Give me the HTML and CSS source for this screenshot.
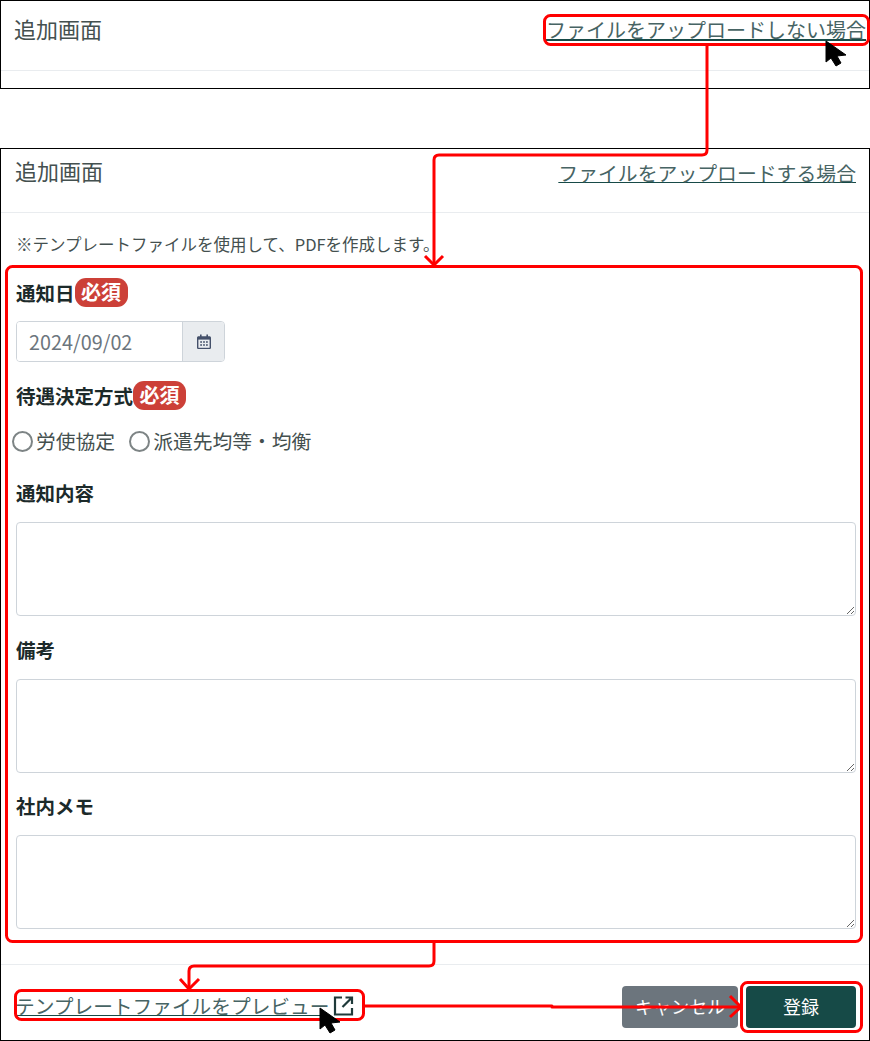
FILE: index.html
```html
<!DOCTYPE html>
<html lang="ja">
<head>
    <meta charset="UTF-8">
    <title>追加画面</title>
    <link rel="stylesheet" href="styles.css">
</head>
<body>
    <div class="page">
        <section class="panel panel-top">
            <div class="panel-header">
                <h2>追加画面</h2>
                <a href="#" class="link link-top">ファイルをアップロードしない場合</a>
            </div>
        </section>

        <section class="panel panel-main">
            <div class="panel-header main-header">
                <h2>追加画面</h2>
                <a href="#" class="link">ファイルをアップロードする場合</a>
            </div>

            <div class="panel-body">
                <p class="note">※テンプレートファイルを使用して、PDFを作成します。</p>

                <div class="form-group group-date">
                    <div class="label-row"><label>通知日</label><span class="badge">必須</span></div>
                    <div class="date-input">
                        <input type="text" value="2024/09/02">
                        <span class="date-addon">
                            <svg width="16" height="16" viewBox="0 0 16 16">
                                <path fill="#44506a" d="M4 0.5h1.6v1.7h4.8V0.5H12v1.7h1.4c.9 0 1.6.7 1.6 1.6v9.6c0 .9-.7 1.6-1.6 1.6H2.6c-.9 0-1.6-.7-1.6-1.6V3.8c0-.9.7-1.6 1.6-1.6H4z"/>
                                <rect x="2.4" y="5.6" width="11.2" height="8.2" fill="#e9ecef"/>
                                <path fill="#44506a" d="M4.2 7.2h1.8v1.6H4.2zM7.1 7.2h1.8v1.6H7.1zM10 7.2h1.8v1.6H10zM4.2 10.2h1.8v1.6H4.2zM7.1 10.2h1.8v1.6H7.1zM10 10.2h1.8v1.6H10z"/>
                            </svg>
                        </span>
                    </div>
                </div>

                <div class="form-group group-radio">
                    <div class="label-row"><label>待遇決定方式</label><span class="badge">必須</span></div>
                    <div class="radio-row">
                        <label class="radio"><span class="radio-mark"></span>労使協定</label>
                        <label class="radio"><span class="radio-mark"></span>派遣先均等・均衡</label>
                    </div>
                </div>

                <div class="form-group group-notice">
                    <div class="label-row plain"><label>通知内容</label></div>
                    <textarea></textarea>
                </div>

                <div class="form-group">
                    <div class="label-row plain"><label>備考</label></div>
                    <textarea></textarea>
                </div>

                <div class="form-group">
                    <div class="label-row plain"><label>社内メモ</label></div>
                    <textarea></textarea>
                </div>
            </div>

            <div class="panel-footer">
                <a href="#" class="link preview-link">テンプレートファイルをプレビュー<svg class="external" width="22" height="22" viewBox="0 0 22 22" fill="none" stroke="#1f3a3a" stroke-width="2.2"><path d="M9 2.5H2v17h17V13"/><path d="M12.5 2.5H19V9M19 2.5L9.5 12"/></svg></a>
                <div class="footer-buttons">
                    <button class="btn btn-cancel">キャンセル</button>
                    <button class="btn btn-submit">登録</button>
                </div>
            </div>
        </section>

        <!-- annotations drawn over the screenshot -->
        <svg class="notes" width="870" height="1041" viewBox="0 0 870 1041" fill="none" stroke="#f00" stroke-width="3" stroke-linejoin="round">
            <rect x="544.5" y="15.5" width="324" height="29" rx="6"/>
            <rect x="6.5" y="266.5" width="855" height="675" rx="6"/>
            <rect x="15.5" y="990.5" width="348" height="29" rx="6"/>
            <rect x="741.5" y="982.5" width="120" height="49" rx="6"/>
            <path d="M707 45V150Q707 155 702 155H439Q434 155 434 160V265"/>
            <path d="M425 256L434 265L443 256"/>
            <path d="M434 942V961Q434 966 429 966H194Q189 966 189 971V989"/>
            <path d="M180 979L189 989L199 979"/>
            <path d="M364 1006H552V1007H741"/>
            <path d="M730 996L741 1007L730 1017"/>
            <path class="cursor" d="M826 41V62L831 58L836 66L841 63L837 56L846 55Z"/>
            <path class="cursor" d="M320 1008V1029L325 1025L330 1033L335 1030L331 1023L340 1022Z"/>
        </svg>
    </div>
</body>
</html>
```

FILE: styles.css
```css
* {
    margin: 0;
    padding: 0;
    box-sizing: border-box;
    font-family: "Noto Sans CJK JP", "Noto Sans", sans-serif;
}

body {
    background-color: white;
    color: #212f2f;
}

.page {
    position: relative;
    width: 870px;
    height: 1041px;
    overflow: hidden;
}

.panel {
    border: 1px solid black;
    background-color: white;
}

.panel-top {
    width: 870px;
    height: 89px;
    margin-bottom: 59px;
}

.panel-main {
    width: 870px;
    height: 893px;
}

.panel-header {
    display: flex;
    justify-content: space-between;
    align-items: flex-start;
    height: 70px;
    padding: 14px 3px 0 13px;
    border-bottom: 1px solid #e9ecef;
}

.main-header {
    height: 64px;
    padding: 8px 13px 0 14px;
}

h2 {
    font-size: 22px;
    font-weight: 400;
    line-height: 30px;
    color: #44504f;
    margin-top: -2px;
}

.link {
    font-size: 20px;
    line-height: 30px;
    color: #476464;
    text-decoration: underline;
    text-decoration-color: #174a47;
}

.main-header .link {
    font-size: 19.85px;
    margin-top: 1px;
}

.panel-body {
    height: 751px;
    padding: 20px 13px 0 15px;
}

.note {
    font-size: 16.5px;
    line-height: 22px;
    color: #44504f;
    margin-bottom: 22px;
}

.form-group {
    margin-bottom: 21px;
}

.group-notice {
    margin-bottom: 22px;
}

.label-row {
    display: flex;
    align-items: center;
    height: 30px;
    margin-bottom: 14px;
}

.label-row.plain {
    height: 24px;
    margin-bottom: 17px;
}

.label-row label {
    font-size: 19.5px;
    font-weight: 700;
    color: #1c2a2a;
}

.badge {
    display: inline-block;
    width: 53px;
    height: 29px;
    line-height: 28px;
    text-align: center;
    background-color: #cc4038;
    color: white;
    font-size: 20px;
    font-weight: 700;
    border-radius: 11px;
}

.date-input {
    display: flex;
    width: 209px;
    height: 41px;
    border: 1px solid #ced4da;
    border-radius: 4px;
    overflow: hidden;
}

.date-input input {
    width: 165px;
    border: none;
    padding: 0 12px;
    font-size: 19.8px;
    color: #6c757d;
    outline: none;
}

.date-addon {
    flex: 1;
    display: flex;
    align-items: center;
    justify-content: center;
    background-color: #e9ecef;
    border-left: 1px solid #ced4da;
}

.group-date {
    margin-bottom: 18px;
}

.group-radio {
    margin-bottom: 27.5px;
}

.group-radio .label-row {
    margin-bottom: 19px;
}

.radio-row {
    display: flex;
    gap: 14px;
    margin-left: -4px;
}

.radio {
    display: flex;
    align-items: center;
    gap: 3px;
    font-size: 19.8px;
    line-height: 24px;
    color: #44504f;
}

.radio-mark {
    width: 21px;
    height: 21px;
    border: 2px solid #7d8485;
    border-radius: 50%;
    background-color: white;
}

textarea {
    display: block;
    width: 100%;
    height: 94px;
    border: 1px solid #ced4da;
    border-radius: 4px;
    resize: vertical;
}

.panel-footer {
    display: flex;
    justify-content: space-between;
    align-items: center;
    height: 76px;
    padding: 9px 13px 0 14px;
    border-top: 1px solid #e9ecef;
}

.preview-link {
    display: flex;
    align-items: center;
    gap: 4px;
    font-size: 19.7px;
    margin-bottom: 3px;
}

.external {
    flex: none;
}

.footer-buttons {
    display: flex;
    gap: 8px;
}

.btn {
    height: 42px;
    padding-bottom: 3px;
    border: none;
    border-radius: 4px;
    color: white;
    font-size: 18px;
}

.btn-cancel {
    width: 116px;
    background-color: #6c757d;
}

.btn-submit {
    width: 110px;
    background-color: #164a47;
}

.notes {
    position: absolute;
    left: 0;
    top: 0;
}

.notes .cursor {
    fill: black;
    stroke: black;
    stroke-width: 1;
}
```
